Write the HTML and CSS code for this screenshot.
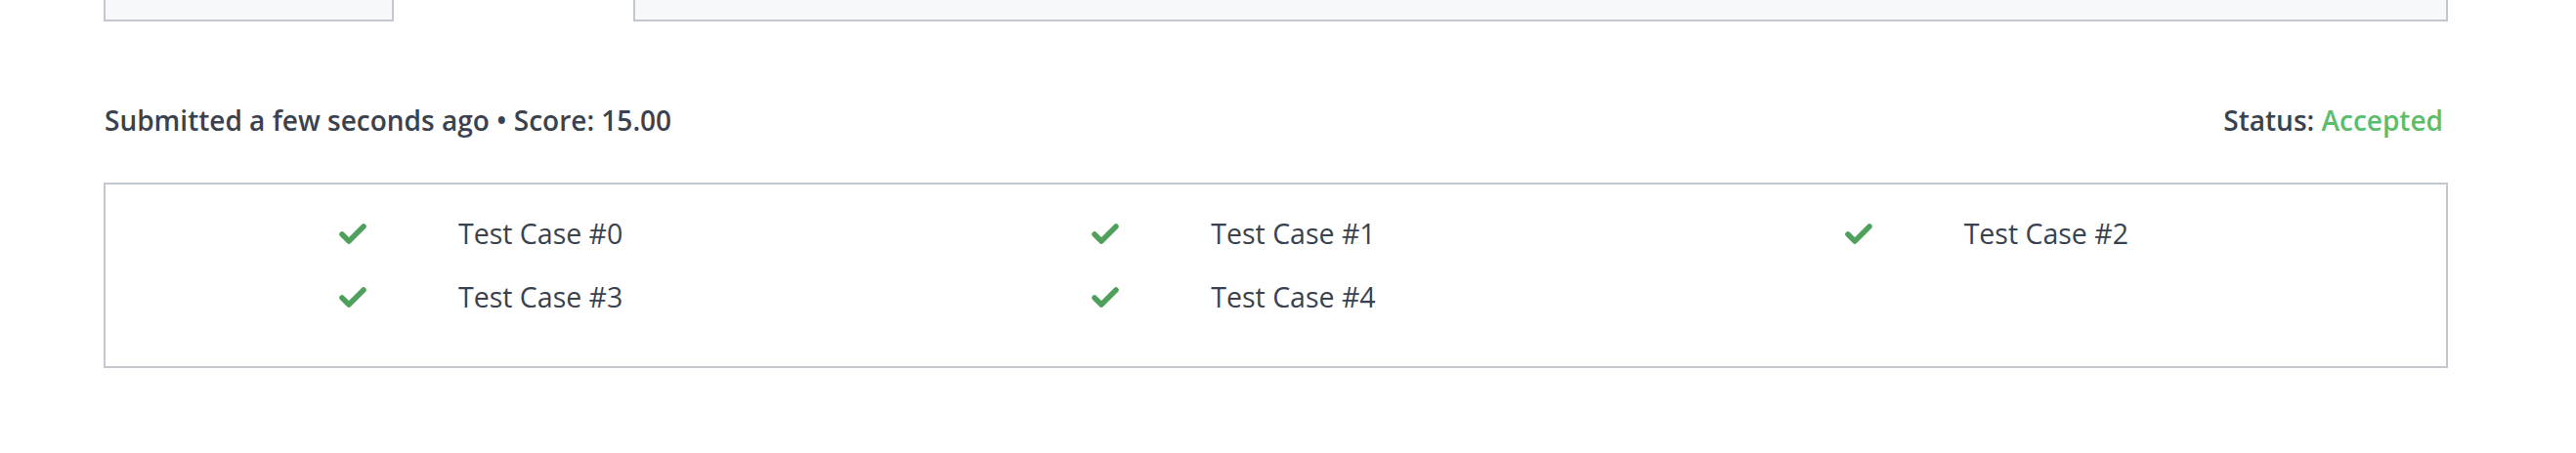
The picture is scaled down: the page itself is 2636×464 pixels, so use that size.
FILE: index.html
```html
<!DOCTYPE html>
<html lang="en">
<head>
<meta charset="utf-8">
<title>Submission</title>
<link rel="stylesheet" href="styles.css">
</head>
<body>
<div class="page">
  <div class="tabs">
    <div class="tab-panel tab-left"></div>
    <div class="tab-gap"></div>
    <div class="tab-panel tab-right"></div>
  </div>

  <div class="summary">
    <div class="summary-left">Submitted a few seconds ago • Score: 15.00</div>
    <div class="summary-right">Status: <span class="accepted">Accepted</span></div>
  </div>

  <div class="results">
    <div class="case"><svg class="check" viewBox="0 0 30 23"><polyline points="4,12 11,19 26,4"/></svg><span class="case-label">Test Case #0</span></div>
    <div class="case"><svg class="check" viewBox="0 0 30 23"><polyline points="4,12 11,19 26,4"/></svg><span class="case-label">Test Case #1</span></div>
    <div class="case"><svg class="check" viewBox="0 0 30 23"><polyline points="4,12 11,19 26,4"/></svg><span class="case-label">Test Case #2</span></div>
    <div class="case"><svg class="check" viewBox="0 0 30 23"><polyline points="4,12 11,19 26,4"/></svg><span class="case-label">Test Case #3</span></div>
    <div class="case"><svg class="check" viewBox="0 0 30 23"><polyline points="4,12 11,19 26,4"/></svg><span class="case-label">Test Case #4</span></div>
  </div>
</div>
</body>
</html>
```

FILE: styles.css
```css
html, body {
  margin: 0;
  padding: 0;
  background: #ffffff;
}

body {
  font-family: "Open Sans", "Liberation Sans", sans-serif;
  color: #39424e;
}

.page {
  width: 2399px;
  margin-left: 106px;
}

.tabs {
  display: flex;
  height: 22px;
}

.tab-panel {
  background: #f7f8fa;
  border: 2px solid #c3c7d0;
  border-top: none;
  box-sizing: border-box;
  height: 22px;
}

.tab-left {
  width: 297px;
}

.tab-gap {
  width: 245px;
}

.tab-right {
  flex: 1;
}

.summary {
  display: flex;
  justify-content: space-between;
  align-items: center;
  margin-top: 84px;
  height: 34px;
  padding: 0 5px 0 1px;
  font-size: 28px;
  font-weight: 600;
  line-height: 34px;
}

.accepted {
  color: #5cbd6c;
}

.results {
  margin-top: 47px;
  border: 2px solid #c3c7d0;
  padding: 30px 42px 51px;
  display: grid;
  grid-template-columns: repeat(3, 1fr);
  row-gap: 25px;
}

.case {
  display: flex;
  align-items: center;
  height: 40px;
  padding-left: 196px;
}

.check {
  width: 30px;
  height: 23px;
  flex: none;
  fill: none;
  stroke: #4f9f5d;
  stroke-width: 5.5;
  stroke-linecap: round;
  stroke-linejoin: round;
}

.case-label {
  margin-left: 93px;
  font-size: 28.5px;
  line-height: 40px;
}
```
